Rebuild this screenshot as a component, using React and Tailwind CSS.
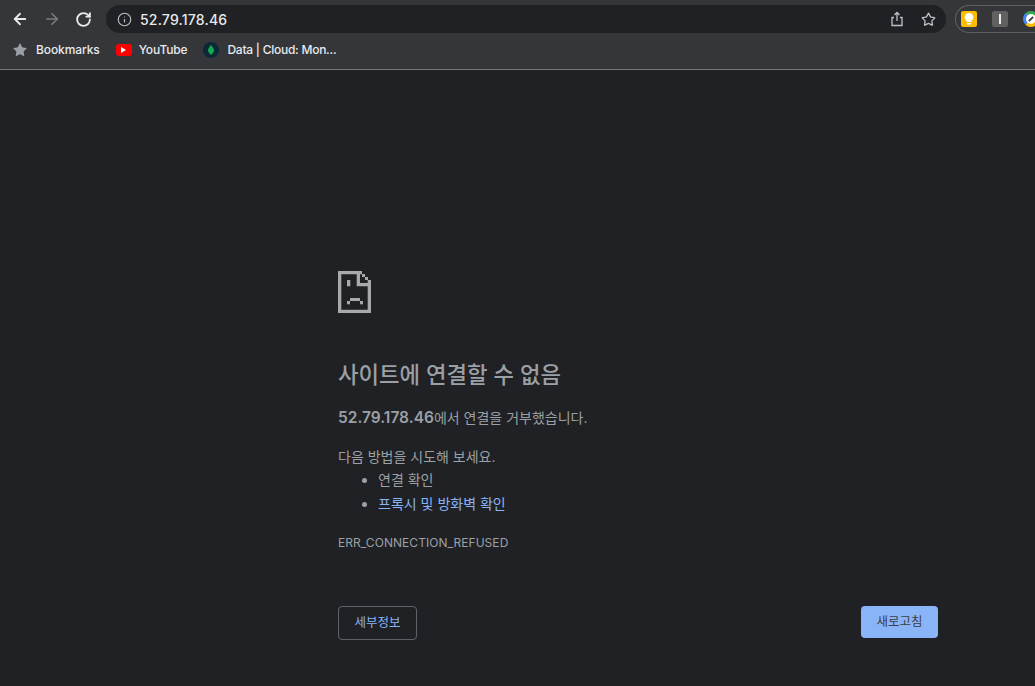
import React from 'react'
import { ArrowLeft, ArrowRight, RotateCw, Info, Star } from 'lucide-react'

const sans = 'font-["Inter","Noto_Sans_CJK_KR",sans-serif]'

function SadFile() {
  return (
    <svg width="33" height="42" viewBox="0 0 33 42" fill="#a8a9ab" className="block">
      <path d="M0 0h24v3.300H3.300v35.400h26.400V14H33v28H0z" />
      <path d="M18.700 0H22v12h11v3.300H18.700z" />
      <path d="M24 3h3v3h-3zM27 6h3v3h-3zM29.700 9H33v3h-3.300z" />
      <rect x="9" y="9" width="3.300" height="6.300" />
      <rect x="12" y="27" width="10" height="3" />
      <rect x="9" y="30" width="3" height="3.300" />
      <rect x="22" y="30" width="3" height="3.300" />
    </svg>
  )
}

function Toolbar() {
  return (
    <div className="h-[70px] shrink-0 bg-[#35363a] border-b border-[#77787b] flex flex-col">
      <div className="h-[38px] flex items-center">
        <div className="w-[106px] flex items-center pl-[11px] gap-[14px] text-[#e8eaed]">
          <ArrowLeft size={18} strokeWidth={2.4} />
          <ArrowRight size={18} strokeWidth={2.2} className="text-[#7b7c7f]" />
          <RotateCw size={17} strokeWidth={2.6} />
        </div>
        <div className="w-[840px] h-[28px] rounded-full bg-[#202124] flex items-center pl-[11px] pr-[10px]">
          <Info size={15} strokeWidth={1.8} className="text-[#bdc1c6]" />
          <span className="ml-[8px] text-[14px] font-medium tracking-[0.2px] text-[#e8eaed]">52.79.178.46</span>
          <div className="ml-auto flex items-center gap-[16px] text-[#bdc1c6]">
            <svg width="16" height="16" viewBox="0 0 16 16" fill="none" stroke="currentColor" strokeWidth="1.3">
              <path d="M5 6.500H3v8h10v-8h-2" />
              <path d="M8 10V1.500M5.500 4 8 1.500 10.500 4" />
            </svg>
            <Star size={15} strokeWidth={2.1} />
          </div>
        </div>
        <div className="ml-[9px] flex-1 h-[28px] rounded-l-full border border-r-0 border-[#5f6063] flex items-center pl-[5px] gap-[15px] overflow-hidden">
          <div className="w-[16px] h-[16px] rounded-[2px] bg-[#fbbc04] flex items-center justify-center shrink-0">
            <svg width="10" height="12" viewBox="0 0 10 12" fill="#fff">
              <path d="M5 0a4.300 4.300 0 0 1 2.500 7.800V9h-5V7.800A4.300 4.300 0 0 1 5 0zM3 10h4v1.500H3z" />
            </svg>
          </div>
          <div className="w-[16px] h-[16px] rounded-[2px] bg-[#616161] flex items-center justify-center shrink-0">
            <div className="w-[2px] h-[10px] bg-[#e8eaed]" />
          </div>
          <div className="w-[16px] h-[16px] rounded-full shrink-0 border-[3px] border-t-[#34a853] border-l-[#4285f4] border-b-[#fbbc04] border-r-[#fbbc04] bg-white flex items-center justify-center">
            <div className="w-[6px] h-[2px] -rotate-45 bg-[#3c4043]" />
          </div>
        </div>
      </div>
      <div className="flex-1 flex items-center pl-[12px] pb-[7px] text-[12px] tracking-[-0.1px] font-medium text-[#e8eaed]">
        <Star size={16} fill="#9aa0a6" strokeWidth={0} className="text-[#9aa0a6]" />
        <span className="ml-[8px]">Bookmarks</span>
        <div className="ml-[16px] w-[16px] h-[12px] rounded-[3px] bg-[#f00] flex items-center justify-center">
          <div className="w-0 h-0 border-y-[3px] border-y-transparent border-l-[5px] border-l-white" />
        </div>
        <span className="ml-[7px] tracking-[-0.15px]">YouTube</span>
        <div className="ml-[16px] w-[16px] h-[16px] rounded-full bg-[#0b2a33] flex items-center justify-center">
          <svg width="6" height="10" viewBox="0 0 6 10" fill="#13aa52">
            <path d="M3 0c2 2.500 3 4 3 5.500S4 9 3 10C2 9 0 7 0 5.500S1 2.500 3 0z" />
          </svg>
        </div>
        <span className="ml-[8px] tracking-[-0.25px]">Data | Cloud: Mon...</span>
      </div>
    </div>
  )
}

export default function App() {
  return (
    <div className={`w-[1035px] h-[686px] overflow-hidden flex flex-col bg-[#202124] ${sans}`}>
      <Toolbar />
      <main className="flex-1 pl-[338px] pr-[97px] pt-[201px] text-[#9aa0a6]">
        <SadFile />
        <h1 className="mt-[46px] text-[22.3px] leading-[32px] font-medium">사이트에 연결할 수 없음</h1>
        <p className="mt-[15px] text-[14px] leading-[24px]">
          <b className="font-semibold text-[15.500px]">52.79.178.46</b>에서 연결을 거부했습니다.
        </p>
        <p className="mt-[15px] text-[14px] leading-[24px]">다음 방법을 시도해 보세요.</p>
        <ul className="-mt-[1px] list-disc pl-[40px] text-[14px] leading-[24px]">
          <li>연결 확인</li>
          <li className="marker:text-[#9aa0a6] text-[#8ab4f8]">프록시 및 방화벽 확인</li>
        </ul>
        <p className="mt-[19px] text-[12px] leading-[16px] tracking-[0.05px]">ERR_CONNECTION_REFUSED</p>
        <div className="mt-[55px] flex items-start justify-between">
          <button className="w-[79px] h-[34px] rounded-[4px] border border-[#5f6368] text-[12.500px] text-[#8ab4f8]">세부정보</button>
          <button className="w-[77px] h-[32px] rounded-[4px] bg-[#8ab4f8] text-[12.500px] text-[#3c4043]">새로고침</button>
        </div>
      </main>
    </div>
  )
}
